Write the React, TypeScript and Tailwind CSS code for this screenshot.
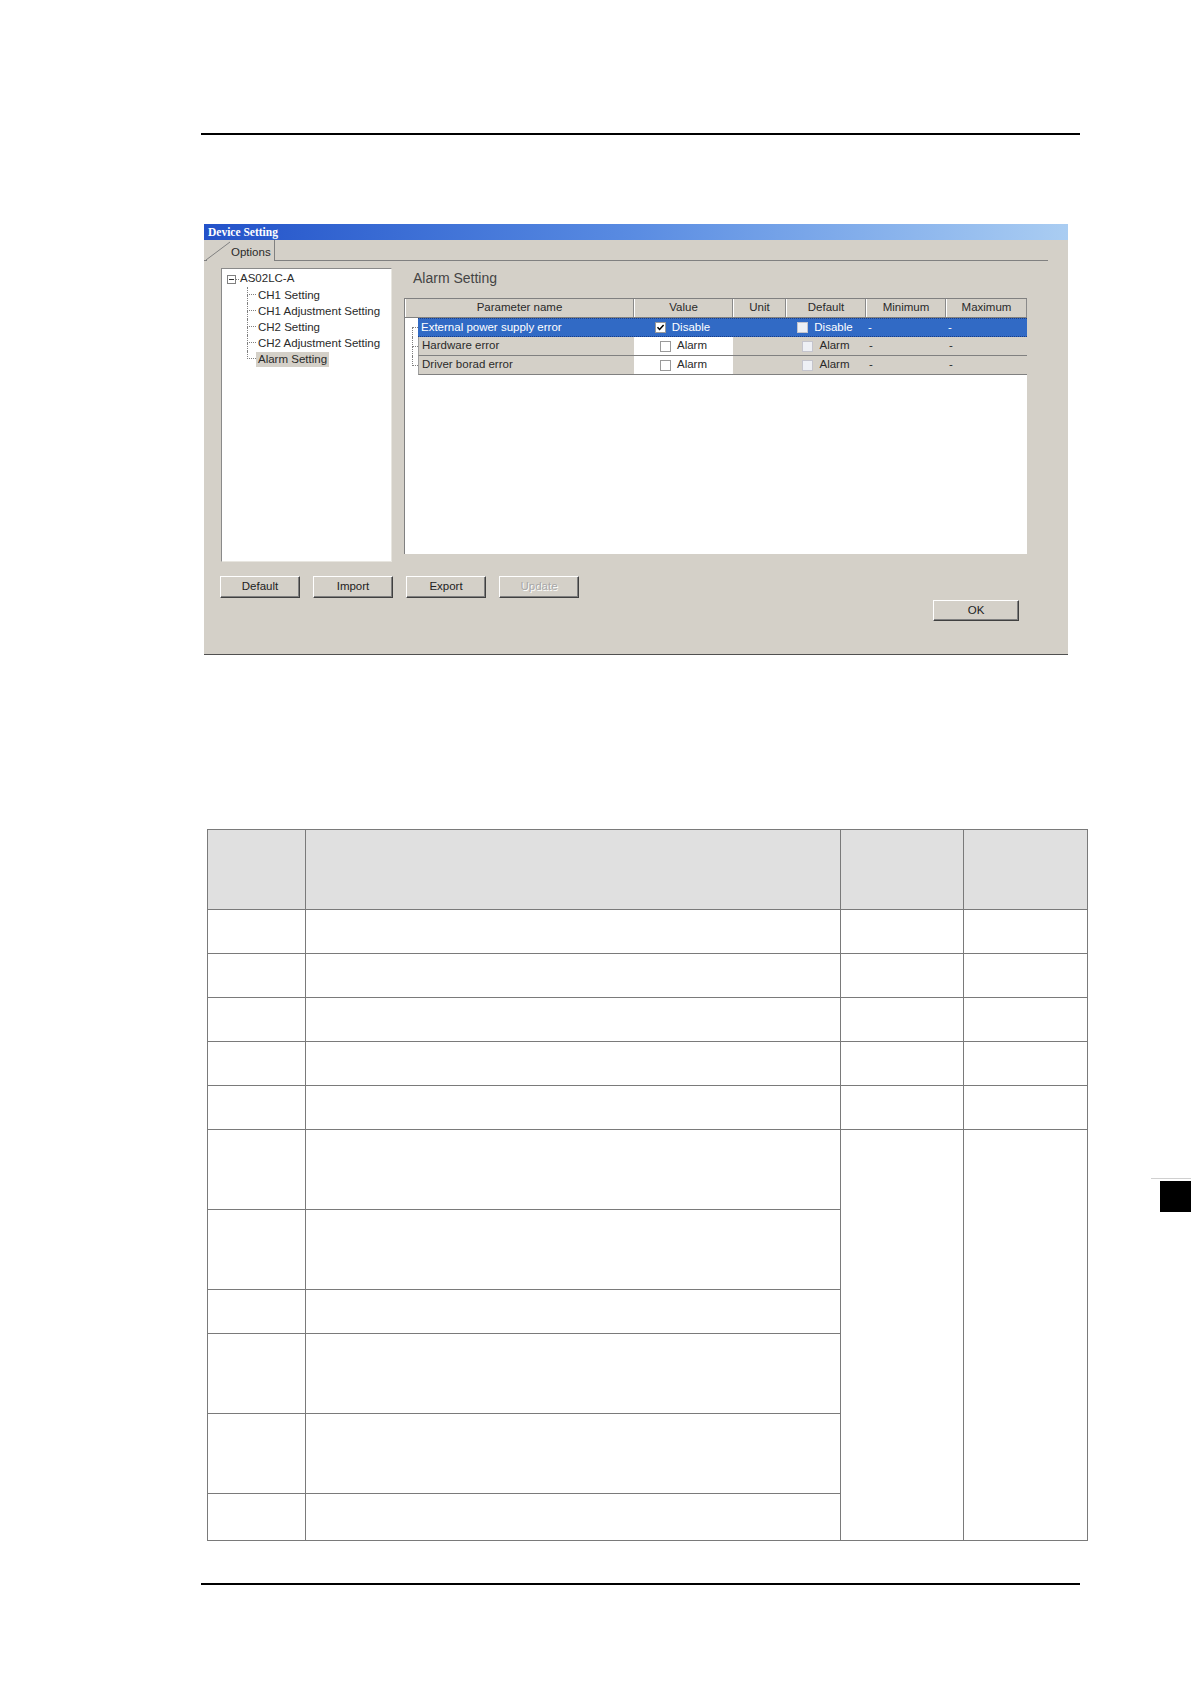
import type { ReactNode } from "react";

const font = { fontFamily: '"Liberation Sans", Arial, sans-serif' };

// Tree connector: dotted elbow used in the tree view and in the grid gutter
function Elbow({ pos, width }: { pos: "first" | "mid" | "last"; width: string }) {
  return (
    <div className={`flex flex-col h-full ${width}`}>
      <div
        className={`h-1/2 border-b border-dotted border-b-[#808080] ${
          pos === "first" ? "" : "border-l border-l-[#808080] border-dotted"
        }`}
      />
      <div
        className={`h-1/2 ${pos === "last" ? "" : "border-l border-dotted border-l-[#808080]"}`}
      />
    </div>
  );
}

function CheckBox({ checked = false, tint = false }: { checked?: boolean; tint?: boolean }) {
  return (
    <span
      className={`inline-flex items-center justify-center w-[11px] h-[11px] border ${
        tint ? "border-[#c4c4cc] bg-[#eef0f5]" : "border-[#9a9a9a] bg-white"
      }`}
    >
      {checked && (
        <svg width="9" height="9" viewBox="0 0 9 9">
          <path d="M1.5 4.2 L3.6 6.5 L7.6 2" fill="none" stroke="#000" strokeWidth="1.5" />
        </svg>
      )}
    </span>
  );
}

function WinButton({ children, disabled = false, w = "w-[80px]", h = "h-[22px]" }: { children: ReactNode; disabled?: boolean; w?: string; h?: string }) {
  return (
    <button
      className={`${w} ${h} bg-[#d4d0c8] border border-t-white border-l-white border-r-[#404040] border-b-[#404040] shadow-[inset_-1px_-1px_0_#808080] text-[11.5px] leading-none ${
        disabled ? "text-[#a8a8a8] [text-shadow:1px_1px_0_#fff]" : "text-[#222]"
      }`}
    >
      {children}
    </button>
  );
}

const treeItems = ["CH1 Setting", "CH1 Adjustment Setting", "CH2 Setting", "CH2 Adjustment Setting", "Alarm Setting"];

const gridCols = [
  { label: "Parameter name", w: "w-[229px]" },
  { label: "Value", w: "w-[99px]" },
  { label: "Unit", w: "w-[53px]" },
  { label: "Default", w: "w-[80px]" },
  { label: "Minimum", w: "w-[80px]" },
  { label: "Maximum", w: "w-[81px]" },
];

const alarmRows = [
  { name: "External power supply error", value: "Disable", checked: true, def: "Disable" },
  { name: "Hardware error", value: "Alarm", checked: false, def: "Alarm" },
  { name: "Driver borad error", value: "Alarm", checked: false, def: "Alarm" },
];

function DeviceSetting() {
  return (
    <div className="ml-[204px] mt-[89px] w-[864px] h-[431px] bg-[#d4d0c8] border-b border-b-[#505050] flex flex-col" style={font}>
      {/* Title bar */}
      <div className="h-[16px] bg-linear-to-r from-[#2352c9] via-[#5a8ce2] to-[#aacdf2] flex items-center pl-[4px] pt-[1px]">
        <span className="text-white font-bold text-[11.5px] leading-none" style={{ fontFamily: '"Liberation Serif", "Times New Roman", serif' }}>
          Device Setting
        </span>
      </div>

      {/* Tab strip */}
      <div className="h-[21px] flex mr-[20px]">
        <svg width="26" height="21" viewBox="0 0 26 21" className="shrink-0">
          <line x1="0" y1="20.5" x2="3" y2="20.5" stroke="#808080" />
          <line x1="2" y1="20" x2="26" y2="2" stroke="#808080" />
        </svg>
        <div className="w-[45px] flex items-center pt-[4px] pl-[1px] border-r border-r-[#808080] text-[11.5px] text-[#2a2a2a]">
          Options
        </div>
        <div className="flex-1 border-b border-b-[#808080]" />
      </div>

      {/* Body */}
      <div className="flex mt-[7px] ml-[17px]">
        {/* Tree */}
        <div className="w-[171px] h-[294px] bg-white border border-t-[#8a8a8a] border-l-[#8a8a8a] border-r-[#e8e6e0] border-b-[#e8e6e0] pt-[2px] pl-[5px] text-[11.5px] text-[#2a2a2a]">
          <div className="flex items-center h-[16px]">
            <span className="w-[9px] h-[9px] border border-[#808080] flex items-center justify-center">
              <span className="w-[5px] h-px bg-[#333]" />
            </span>
            <span className="w-[3px] border-t border-dotted border-t-[#808080] mr-[1px]" />
            <span>AS02LC-A</span>
          </div>
          <div className="ml-[20px]">
            {treeItems.map((item, i) => (
              <div key={item} className="flex items-center h-[16px]">
                <Elbow pos={i === treeItems.length - 1 ? "last" : "mid"} width="w-[9px]" />
                <span className={`px-[2px] leading-[15px] ${i === treeItems.length - 1 ? "bg-[#d4d0c8]" : ""}`}>{item}</span>
              </div>
            ))}
          </div>
        </div>

        {/* Right pane */}
        <div className="ml-[12px] w-[623px] flex flex-col">
          <div className="h-[30px] pl-[9px] pt-[2px] text-[14px] leading-[16px] text-[#444]">Alarm Setting</div>
          <div className="h-[256px] bg-white border-t border-l border-t-[#808080] border-l-[#808080] text-[11.5px]">
            {/* Header */}
            <div className="flex h-[19px] bg-[#d4d0c8] border-b border-b-[#808080]">
              {gridCols.map((c) => (
                <div key={c.label} className={`${c.w} flex items-center justify-center border-l border-l-white border-r border-r-[#8a8a8a] text-[#2a2a2a] pb-[1px]`}>
                  {c.label}
                </div>
              ))}
            </div>
            {/* Rows */}
            {alarmRows.map((r, i) => {
              const sel = i === 0;
              return (
                <div key={r.name} className="flex h-[19px]">
                  <div className="w-[13px] h-full flex pl-[7px] bg-white">
                    <Elbow pos={i === 0 ? "first" : i === alarmRows.length - 1 ? "last" : "mid"} width="w-[6px]" />
                  </div>
                  <div
                    className={`flex-1 flex border-b ${
                      sel
                        ? "bg-[#316ac5] text-white border-t border-dotted border-[#183c88]"
                        : "bg-[#d4d0c8] text-[#2a2a2a] border-b-[#808080] border-l border-l-[#a0a0a0]"
                    }`}
                  >
                    <div className="w-[215px] flex items-center pl-[3px]">{r.name}</div>
                    <div className={`w-[99px] flex items-center justify-center gap-[6px] ${sel ? "" : "bg-white"}`}>
                      <CheckBox checked={r.checked} />
                      <span>{r.value}</span>
                    </div>
                    <div className="w-[53px]" />
                    <div className="w-[80px] flex items-center justify-center gap-[6px]">
                      <CheckBox tint />
                      <span>{r.def}</span>
                    </div>
                    <div className="w-[80px] flex items-center pl-[3px]">-</div>
                    <div className="w-[81px] flex items-center pl-[3px]">-</div>
                  </div>
                </div>
              );
            })}
          </div>
        </div>
      </div>

      {/* Buttons */}
      <div className="flex gap-[13px] ml-[16px] mt-[14px]">
        <WinButton>Default</WinButton>
        <WinButton>Import</WinButton>
        <WinButton>Export</WinButton>
        <WinButton disabled>Update</WinButton>
      </div>
      <div className="flex justify-end pr-[49px] mt-[2px]">
        <WinButton w="w-[86px]" h="h-[21px]">OK</WinButton>
      </div>
    </div>
  );
}

const cell = "border border-[#7a7a7a]";
const shortRows = [0, 1, 2, 3, 4];
const tallRows = ["h-[80px]", "h-[80px]", "h-[44px]", "h-[80px]", "h-[80px]", "h-[47px]"];

function BlankTable() {
  return (
    <table className="ml-[207px] mt-[174px] w-[880px] table-fixed border-collapse">
      <colgroup>
        <col className="w-[98px]" />
        <col className="w-[535px]" />
        <col className="w-[123px]" />
        <col className="w-[124px]" />
      </colgroup>
      <tbody>
        <tr className="h-[80px] bg-[#e0e0e0]">
          <td className={cell} />
          <td className={cell} />
          <td className={cell} />
          <td className={cell} />
        </tr>
        {shortRows.map((r) => (
          <tr key={r} className="h-[44px]">
            <td className={cell} />
            <td className={cell} />
            <td className={cell} />
            <td className={cell} />
          </tr>
        ))}
        {tallRows.map((h, i) => (
          <tr key={i} className={h}>
            <td className={cell} />
            <td className={cell} />
            {i === 0 && (
              <>
                <td className={cell} rowSpan={6} />
                <td className={cell} rowSpan={6} />
              </>
            )}
          </tr>
        ))}
      </tbody>
    </table>
  );
}

export default function App() {
  return (
    <div className="relative w-[1191px] h-[1684px] bg-white overflow-hidden">
      <div className="pt-[133px]">
        <div className="ml-[201px] w-[879px] h-[2px] bg-black" />
      </div>
      <DeviceSetting />
      <BlankTable />
      <div className="ml-[201px] mt-[42px] w-[879px] h-[1.5px] bg-black" />

      {/* chapter thumb tab on the page edge */}
      <div className="absolute left-[1151px] top-[1178px] w-[40px] h-px bg-[#d0d0d0]" />
      <div className="absolute left-[1160px] top-[1181px] w-[31px] h-[31px] bg-black" />
    </div>
  );
}
